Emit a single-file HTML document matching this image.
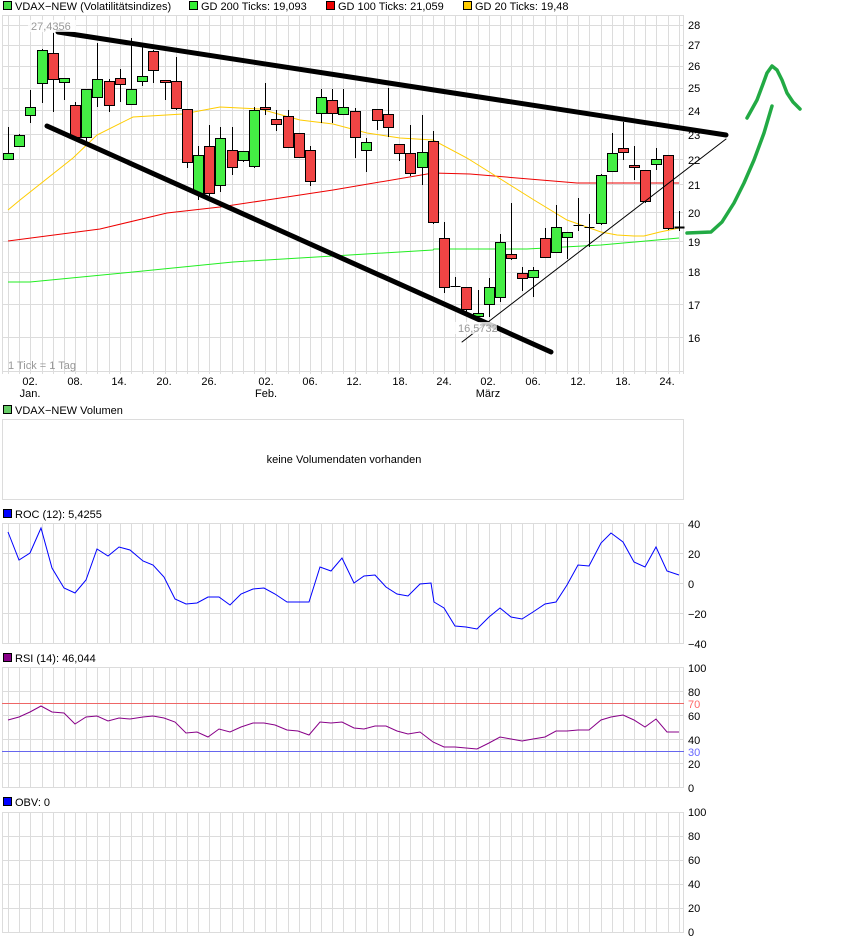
<!DOCTYPE html>
<html><head><meta charset="utf-8"><style>
body{margin:0;background:#fff;width:868px;height:940px;overflow:hidden}
svg{display:block;font-family:"Liberation Sans",sans-serif;font-size:11px}
</style></head><body>
<svg id="s" width="868" height="940" xmlns="http://www.w3.org/2000/svg">
<g id="grid" stroke="#dcdcdc" stroke-width="1" fill="none"></g>
<g id="ma" fill="none" stroke-width="1">
<polyline stroke="#22ee22" points="8,282 30,282 133,272 233,262 333,256 433,250 434,249 527,249 601,245 679,238"/>
<polyline stroke="#ee0000" points="8,241 100,229 167,213 220,207 267,200 333,190 433,173 470,174 577,183 620,183 679,183"/>
<polyline stroke="#ffcc00" points="8,210 20,200 73,158 97,135 133,117 183,114 220,107 260,109 300,120 333,124 367,133 400,138 433,140 467,158 534,200 567,220 601,232 617,235 634,236 644,236 660,232 679,228"/>
</g>
<g id="candles" stroke="#000" stroke-width="1"></g>
<g stroke="#000" stroke-linecap="round">
<line x1="58" y1="32" x2="726" y2="135" stroke-width="5"/>
<line x1="47" y1="126" x2="551" y2="352" stroke-width="5"/>
<line x1="462" y1="342" x2="726" y2="139" stroke-width="1"/>
</g>
<rect x="28" y="20" width="48" height="12" fill="#fff" opacity=".8"/>
<text x="31" y="30" fill="#999">27,4356</text>
<rect x="455" y="322" width="42" height="12" fill="#fff" opacity=".8"/>
<text x="458" y="332" fill="#999">16,5732</text>
<text x="8" y="369" fill="#999">1 Tick = 1 Tag</text>
<g fill="none" stroke="#22aa44" stroke-width="3.5" stroke-linecap="round" stroke-linejoin="round">
<polyline points="687,233 711,232 722,222 734,203 744,183 754,160 764,133 772,106"/>
<polyline points="747,118 757,100 763,84 767,73 772,66 777,70 782,80 787,93 793,102 800,109"/>
</g>
<!-- legends -->
<g stroke="#000" stroke-width="1">
<rect x="3.5" y="1.5" width="8" height="8" fill="#44dd44"/>
<rect x="189.5" y="1.5" width="8" height="8" fill="#33ee33"/>
<rect x="326.5" y="1.5" width="8" height="8" fill="#ee0000"/>
<rect x="463.5" y="1.5" width="8" height="8" fill="#ffcc00"/>
<rect x="3.5" y="405.5" width="8" height="8" fill="#66cc66"/>
<rect x="3.5" y="509.5" width="8" height="8" fill="#0000ff"/>
<rect x="3.5" y="653.5" width="8" height="8" fill="#880088"/>
<rect x="3.5" y="797.5" width="8" height="8" fill="#0000ff"/>
</g>
<text x="15" y="10">VDAX−NEW (Volatilitätsindizes)</text>
<text x="201" y="10">GD 200 Ticks: 19,093</text>
<text x="338" y="10">GD 100 Ticks: 21,059</text>
<text x="475" y="10">GD 20 Ticks: 19,48</text>
<text x="15" y="414">VDAX−NEW Volumen</text>
<text x="15" y="518">ROC (12): 5,4255</text>
<text x="15" y="662">RSI (14): 46,044</text>
<text x="15" y="806">OBV: 0</text>
<!-- price axis -->
<g>
<text x="688" y="29">28</text><text x="688" y="49">27</text><text x="688" y="70">26</text><text x="688" y="92">25</text><text x="688" y="115">24</text><text x="688" y="139">23</text><text x="688" y="164">22</text><text x="688" y="189">21</text><text x="688" y="217">20</text><text x="688" y="246">19</text><text x="688" y="276">18</text><text x="688" y="309">17</text><text x="688" y="342">16</text>
</g>
<g text-anchor="middle">
<text x="30" y="385">02.</text><text x="30" y="397">Jan.</text>
<text x="75" y="385">08.</text><text x="119" y="385">14.</text><text x="164" y="385">20.</text><text x="209" y="385">26.</text>
<text x="266" y="385">02.</text><text x="266" y="397">Feb.</text>
<text x="310" y="385">06.</text><text x="354" y="385">12.</text><text x="400" y="385">18.</text><text x="444" y="385">24.</text>
<text x="488" y="385">02.</text><text x="488" y="397">März</text>
<text x="533" y="385">06.</text><text x="578" y="385">12.</text><text x="623" y="385">18.</text><text x="667" y="385">24.</text>
</g>
<rect x="2.5" y="419.5" width="681" height="80" fill="none" stroke="#dcdcdc"/>
<text x="344" y="463" text-anchor="middle">keine Volumendaten vorhanden</text>
<g>
<text x="688" y="528">40</text><text x="688" y="558">20</text><text x="688" y="588">0</text><text x="688" y="618">−20</text><text x="688" y="648">−40</text>
<text x="688" y="672">100</text><text x="688" y="696">80</text><text x="688" y="708" fill="#ff6666">70</text><text x="688" y="720">60</text><text x="688" y="744">40</text><text x="688" y="756" fill="#6666ff">30</text><text x="688" y="768">20</text><text x="688" y="792">0</text>
<text x="688" y="816">100</text><text x="688" y="840">80</text><text x="688" y="864">60</text><text x="688" y="888">40</text><text x="688" y="912">20</text><text x="688" y="936">0</text>
</g>
<line x1="2" y1="703.5" x2="684" y2="703.5" stroke="#ee6666"/>
<line x1="2" y1="751.5" x2="684" y2="751.5" stroke="#6666ee"/>
<polyline fill="none" stroke="#0000ff" points="8,532 19,560 30,553 41,528 52,568 64,588 75,593 86,580 97,549 108,556 119,547 130,550 143,561 153,565 164,577 175,599 186,604 197,603 208,597 219,597 230,605 241,594 253,589 264,588 275,594 287,602 309,602 320,567 331,571 342,558 354,583 364,576 375,575 386,587 397,594 408,596 420,584 431,583 434,602 444,608 455,626 466,627 477,629 489,617 500,608 511,617 522,619 533,612 545,604 556,602 567,585 578,565 589,566 601,543 611,533 623,542 634,562 645,567 656,547 667,571 679,575"/>
<polyline fill="none" stroke="#880088" points="8,720 19,717 30,712 41,706 52,712 64,713 75,724 86,717 97,716 108,721 119,718 130,719 143,717 153,716 164,718 175,722 186,733 197,732 208,737 219,729 230,732 241,727 253,723 264,723 275,725 287,730 298,731 309,735 320,722 331,723 342,722 354,728 364,729 375,726 386,726 397,731 408,734 420,732 433,742 444,747 455,747 466,748 477,749 489,743 500,737 511,739 522,741 533,739 545,737 556,731 567,731 578,730 589,730 601,720 611,717 623,715 634,720 645,727 656,719 667,732 679,732"/>
</svg>
<script>
var NS="http://www.w3.org/2000/svg";
function el(p,t,a){var e=document.createElementNS(NS,t);for(var k in a)e.setAttribute(k,a[k]);p.appendChild(e);return e;}
var g=document.getElementById("grid");
function vgrid(y1,y2){for(var i=0;i<=60;i++){var x=Math.round(8+11.18*i)+.5;el(g,"line",{x1:x,y1:y1,x2:x,y2:y2});}
el(g,"line",{x1:2.5,y1:y1,x2:2.5,y2:y2});el(g,"line",{x1:683.5,y1:y1,x2:683.5,y2:y2});}
function hl(y){el(g,"line",{x1:2,y1:y+.5,x2:684,y2:y+.5});}
vgrid(15,374);[15,25,45,66,88,110,134,159,184,212,241,272,304,337,371].forEach(hl);
vgrid(523,643);[523,553,583,613,643].forEach(hl);
vgrid(667,787);[667,691,715,739,763,787].forEach(hl);
vgrid(812,932);[812,836,860,884,908,932].forEach(hl);
var d=[[153,159,127,159,"g"],[135,146,134,147,"g"],[107,115,90,123,"g"],[50,83,49,103,"g"],[53,79,33,112,"r"],[78,82,78,100,"g"],[105,137,102,140,"r"],[89,137,89,143,"g"],[79,97,43,107,"g"],[81,105,79,112,"r"],[78,84,69,102,"r"],[89,104,38,105,"g"],[76,81,47,86,"g"],[51,70,50,83,"r"],[80,82,80,100,"r"],[81,108,57,110,"r"],[109,162,109,168,"r"],[155,193,146,200,"g"],[146,193,125,196,"r"],[138,185,127,192,"g"],[150,167,127,175,"r"],[151,160,151,162,"g"],[110,166,107,168,"g"],[107,109,83,115,"r"],[119,124,110,131,"r"],[116,147,110,147,"r"],[133,157,133,157,"r"],[150,181,146,186,"r"],[97,113,89,123,"g"],[100,113,89,123,"r"],[107,114,89,114,"g"],[111,137,108,158,"r"],[142,150,138,172,"g"],[109,120,109,130,"r"],[114,127,88,137,"r"],[144,153,144,161,"r"],[153,173,125,176,"r"],[152,167,115,185,"g"],[141,222,131,224,"r"],[238,287,222,293,"r"],[286,286,277,287,"x"],[287,309,287,312,"r"],[313,316,290,317,"g"],[287,304,278,317,"g"],[242,297,234,302,"g"],[254,258,203,260,"r"],[273,278,267,291,"r"],[270,277,267,297,"g"],[238,257,228,257,"r"],[227,252,205,252,"g"],[232,237,232,259,"g"],[225,225,198,231,"x"],[227,227,214,247,"x"],[175,223,174,225,"g"],[153,171,133,171,"g"],[148,152,122,160,"r"],[165,167,146,180,"r"],[170,201,170,203,"r"],[159,164,148,170,"g"],[155,228,155,230,"r"],[227,227,211,231,"x"]];
var c=document.getElementById("candles");
d.forEach(function(k,i){var x=Math.round(8+11.18*i)+.5;
el(c,"line",{x1:x,y1:k[2],x2:x,y2:k[3]});
if(k[4]=="x"){el(c,"line",{x1:x-5,y1:k[0]+.5,x2:x+5,y2:k[0]+.5,"stroke-width":i==60?2:1});}
else el(c,"rect",{x:x-5,y:k[0]+.5,width:10,height:Math.max(2,k[1]-k[0]),fill:k[4]=="g"?"#44ee44":"#f04444"});});
</script>
</body></html>
